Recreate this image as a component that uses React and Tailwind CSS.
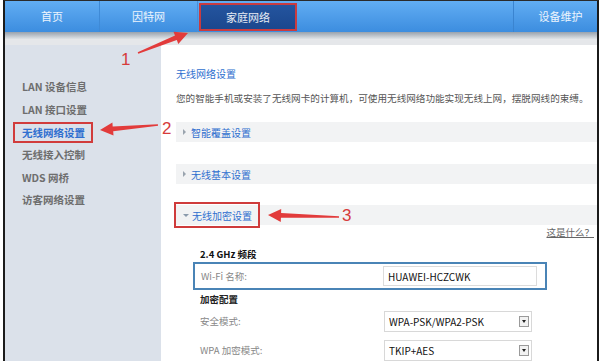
import React from "react";

function arrowPoints(tx, ty, px, py, L = 13, W = 6.5, t0 = 0.8, t1 = 2.4) {
  const dx = px - tx, dy = py - ty;
  const len = Math.hypot(dx, dy);
  const ux = dx / len, uy = dy / len;
  const nx = -uy, ny = ux;
  const kx = px - ux * L, ky = py - uy * L;
  const pts = [
    [tx + nx * t0, ty + ny * t0],
    [kx + nx * t1, ky + ny * t1],
    [kx + nx * W, ky + ny * W],
    [px, py],
    [kx - nx * W, ky - ny * W],
    [kx - nx * t1, ky - ny * t1],
    [tx - nx * t0, ty - ny * t0],
  ];
  return pts.map((p) => p[0].toFixed(1) + "," + p[1].toFixed(1)).join(" ");
}

const sideItems = ["LAN 设备信息", "LAN 接口设置", "无线网络设置", "无线接入控制", "WDS 网桥", "访客网络设置"];

function Bar({ label, open, boxed }) {
  return (
    <div className="h-[20px] bg-[#f2f3f4] flex items-center relative">
      <div
        className={
          boxed
            ? "flex items-center h-[26px] -ml-[2px] pl-[7px] pr-[6px] border-2 border-[#cf3b3b]"
            : "flex items-center pl-[7px]"
        }
      >
        {open ? (
          <span className="w-0 h-0 border-l-[3px] border-r-[3px] border-t-[3px] border-l-transparent border-r-transparent border-t-[#8a9aab] mr-[3px]" />
        ) : (
          <span className="w-0 h-0 border-t-[3px] border-b-[3px] border-l-[3px] border-t-transparent border-b-transparent border-l-[#9aa4ae] mr-[5px]" />
        )}
        <span className="text-[10px] text-[#2f6fcf]">{label}</span>
      </div>
    </div>
  );
}

function Select({ value }) {
  return (
    <div className="w-[148px] h-[21px] border border-[#d8d8d8] bg-white flex items-center pl-[4px] pr-[2px]">
      <span className="flex-1 text-[10px] text-[#111]">{value}</span>
      <span className="w-[10px] h-[11px] border border-[#9a9a9a] bg-[#f2f2f2] flex items-center justify-center">
        <span className="w-0 h-0 border-l-[2.5px] border-r-[2.5px] border-t-[3px] border-l-transparent border-r-transparent border-t-[#222]" />
      </span>
    </div>
  );
}

export default function App() {
  return (
    <div
      className="w-[600px] h-[361px] overflow-hidden relative bg-white"
      style={{ fontFamily: '"Noto Sans CJK SC", "Noto Sans", sans-serif' }}
    >
      <div className="ml-[3px] w-[596px] h-full border-x-2 border-[#1b1b1b] flex flex-col border-t border-t-[#2a2a2a]">
        {/* header */}
        <div className="h-[34px] bg-gradient-to-b from-[#61adf3] to-[#3c8ddf] flex text-[11px] text-white/90">
          <div className="w-[95px] flex items-center justify-center border-r border-[#3f8ad6]">首页</div>
          <div className="w-[98px] flex items-center justify-center border-r border-[#4790da]">因特网</div>
          <div className="w-[100px] flex items-center justify-center pt-[2px] pb-[1px] px-[1px]">
            <div className="w-full h-full border-2 border-[#c93b40] bg-gradient-to-b from-[#24559f] to-[#1b478e] flex items-center justify-center text-white/90">
              家庭网络
            </div>
          </div>
          <div className="flex-1" />
          <div className="w-[84px] flex items-center justify-center pl-[10px] border-l border-[#3a84d0]">设备维护</div>
        </div>
        <div className="h-[8px] bg-gradient-to-b from-[#98a2ad] to-[#dfe3e7]" />
        <div className="h-[7px] bg-[#e5e7ea]" />
        {/* body */}
        <div className="flex flex-1">
          <div className="w-[156px] bg-[#dbe1ea] pt-[31px]">
            {sideItems.map((it, i) =>
              i === 2 ? (
                <div key={it} className="h-[22.6px] flex items-center">
                  <div className="ml-[8px] w-[80px] h-[21px] border-2 border-[#d13c3c] pl-[7px] flex items-center text-[10.5px] font-bold text-[#2f6fd0]">
                    {it}
                  </div>
                </div>
              ) : (
                <div key={it} className="h-[22.6px] flex items-center pl-[17px] text-[10.5px] font-bold text-[#6e6e6e]">
                  {it}
                </div>
              )
            )}
          </div>
          <div className="flex-1 pl-[15px] pt-[22px] flex flex-col">
            <div className="h-[14px] leading-[14px] text-[10px] text-[#2f6fcf]">无线网络设置</div>
            <div className="mt-[10px] h-[14px] leading-[14px] text-[9.6px] text-[#555] whitespace-nowrap">
              您的智能手机或安装了无线网卡的计算机，可使用无线网络功能实现无线上网，摆脱网线的束缚。
            </div>
            <div className="mt-[17px]">
              <Bar label="智能覆盖设置" />
            </div>
            <div className="mt-[22px]">
              <Bar label="无线基本设置" />
            </div>
            <div className="mt-[21px]">
              <Bar label="无线加密设置" open boxed />
            </div>
            <div className="h-[14px] leading-[14px] flex justify-end pr-[3px]">
              <span className="text-[9.5px] text-[#666] underline">这是什么？</span>
            </div>
            <div className="mt-[8px] ml-[24px] h-[14px] leading-[14px] text-[9.5px] font-bold text-[#111]">2.4 GHz 频段</div>
            <div className="mt-[1px] ml-[17px] w-[354px] h-[28px] border-2 border-[#4a84b6] flex items-center pl-[6px]">
              <span className="w-[182px] text-[9.5px] text-[#888]">Wi-Fi 名称:</span>
              <div className="w-[154px] h-[20px] border border-[#dcdcdc] flex items-center pl-[4px] text-[10px] text-[#111]">
                HUAWEI-HCZCWK
              </div>
            </div>
            <div className="mt-[2px] ml-[24px] h-[14px] leading-[14px] text-[9.5px] font-bold text-[#222]">加密配置</div>
            <div className="mt-[4px] ml-[24px] flex items-center h-[22px]">
              <span className="w-[184px] text-[9.5px] text-[#888]">安全模式:</span>
              <Select value="WPA-PSK/WPA2-PSK" />
            </div>
            <div className="mt-[7px] ml-[24px] flex items-center h-[22px]">
              <span className="w-[184px] text-[9.5px] text-[#888]">WPA 加密模式:</span>
              <Select value="TKIP+AES" />
            </div>
          </div>
        </div>
      </div>

      {/* annotations */}
      <svg className="absolute inset-0 pointer-events-none" width="600" height="361" viewBox="0 0 600 361">
        <polygon points={arrowPoints(138, 53, 188, 33)} fill="#e23b3b" />
        <polygon points={arrowPoints(158, 125, 100, 130)} fill="#e23b3b" />
        <polygon points={arrowPoints(339, 217, 268, 215)} fill="#e23b3b" />
      </svg>
      <span className="absolute left-[121px] top-[50px] text-[17px] leading-[20px] text-[#d63b3b]" style={{ fontFamily: '"Liberation Sans", sans-serif' }}>1</span>
      <span className="absolute left-[162px] top-[119px] text-[17px] leading-[20px] text-[#d63b3b]" style={{ fontFamily: '"Liberation Sans", sans-serif' }}>2</span>
      <span className="absolute left-[342px] top-[206px] text-[17px] leading-[20px] text-[#d63b3b]" style={{ fontFamily: '"Liberation Sans", sans-serif' }}>3</span>
    </div>
  );
}
